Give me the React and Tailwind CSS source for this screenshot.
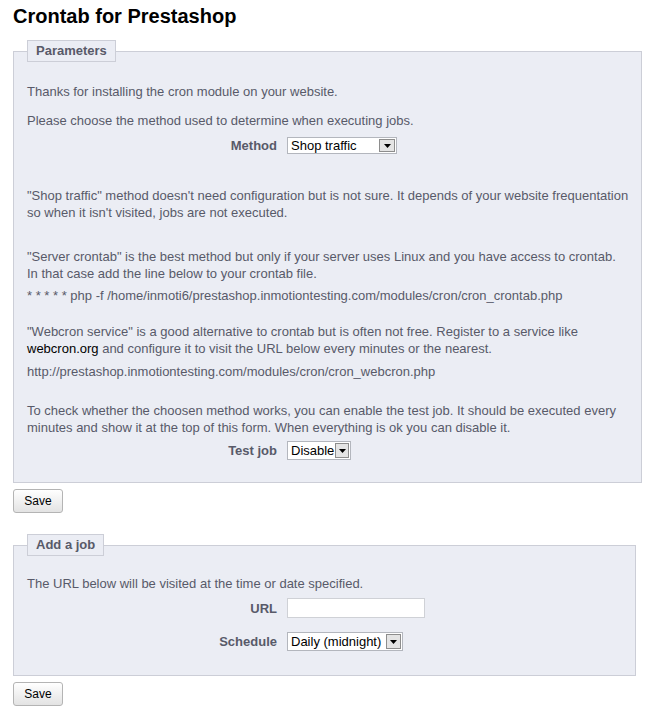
import React from "react"

const FONT = { fontFamily: '"Liberation Sans", Arial, sans-serif' }

function Arrow({ className }) {
  return (
    <div className={`flex items-center justify-center bg-[#e4e4e4] border border-[#8d8d8d] shrink-0 ${className}`}>
      <svg width="7" height="4" viewBox="0 0 7 4">
        <path d="M0 0H7L3.5 4Z" fill="#000" />
      </svg>
    </div>
  )
}

function FakeSelect({ value, className, arrowClass }) {
  return (
    <div className={`flex items-stretch bg-white border border-[#b3b6bd] ${className}`}>
      <span className="flex-1 pl-[3px] text-[13px] leading-none text-black flex items-center whitespace-nowrap">{value}</span>
      <Arrow className={arrowClass} />
    </div>
  )
}

function Row({ label, children, className }) {
  return (
    <div className={`flex items-center ${className}`}>
      <label className="w-[250px] text-right font-bold text-[13px] text-[#585a69] mr-[10px] leading-[17px]">{label}</label>
      {children}
    </div>
  )
}

function SaveButton({ className }) {
  return (
    <button className={`w-[50px] h-[24px] rounded-[3px] border border-[#b4b4b4] bg-gradient-to-b from-white to-[#e3e3e3] text-[12px] text-black ${className}`}>
      Save
    </button>
  )
}

function Fieldset({ title, children, className }) {
  return (
    <fieldset className={`border border-[#ccced7] bg-[#ebedf4] px-[13px] ${className}`}>
      <legend className="border border-[#ccced7] bg-[#ebedf4] px-[8px] py-[3px] text-[13px] leading-[14px] font-bold text-[#585a69]">
        {title}
      </legend>
      {children}
    </fieldset>
  )
}

export default function App() {
  return (
    <div className="bg-white min-h-[710px] w-[649px] px-[13px] pt-[4px] text-[13px] leading-[17px] text-[#585a69]" style={FONT}>
      <h2 className="text-[20px] leading-[24px] font-bold text-black">Crontab for Prestashop</h2>

      <Fieldset title="Parameters" className="mt-[12px] pt-[21px] pb-[22px]">
        <p>Thanks for installing the cron module on your website.</p>
        <p className="mt-[12px]">Please choose the method used to determine when executing jobs.</p>
        <Row label="Method" className="mt-[8px]">
          <FakeSelect value="Shop traffic" className="w-[110px] h-[17px]" arrowClass="w-[16px] m-[1px]" />
        </Row>

        <p className="mt-[33px] whitespace-nowrap">
          "Shop traffic" method doesn't need configuration but is not sure. It depends of your website frequentation<br />
          so when it isn't visited, jobs are not executed.
        </p>

        <p className="mt-[27px] whitespace-nowrap">
          "Server crontab" is the best method but only if your server uses Linux and you have access to crontab.<br />
          In that case add the line below to your crontab file.
        </p>
        <p className="mt-[5px]">* * * * * php -f /home/inmoti6/prestashop.inmotiontesting.com/modules/cron/cron_crontab.php</p>

        <p className="mt-[19px] whitespace-nowrap">
          "Webcron service" is a good alternative to crontab but is often not free. Register to a service like<br />
          <a className="text-black">webcron.org</a> and configure it to visit the URL below every minutes or the nearest.
        </p>
        <p className="mt-[6px]">http://prestashop.inmotiontesting.com/modules/cron/cron_webcron.php</p>

        <p className="mt-[22px] whitespace-nowrap">
          To check whether the choosen method works, you can enable the test job. It should be executed every<br />
          minutes and show it at the top of this form. When everything is ok you can disable it.
        </p>
        <Row label="Test job" className="mt-[5px]">
          <FakeSelect value="Disable" className="w-[64px] h-[19px]" arrowClass="w-[14px] m-[1px]" />
        </Row>
      </Fieldset>

      <SaveButton className="mt-[6px]" />

      <Fieldset title="Add a job" className="mt-[21px] pt-[19px] pb-[24px]">
        <p>The URL below will be visited at the time or date specified.</p>
        <Row label="URL" className="mt-[6px]">
          <div className="w-[138px] h-[20px] bg-white border border-[#cfd1d6]" />
        </Row>
        <Row label="Schedule" className="mt-[14px]">
          <FakeSelect value="Daily (midnight)" className="w-[116px] h-[19px]" arrowClass="w-[15px] m-[1px]" />
        </Row>
      </Fieldset>

      <SaveButton className="mt-[6px]" />
    </div>
  )
}
